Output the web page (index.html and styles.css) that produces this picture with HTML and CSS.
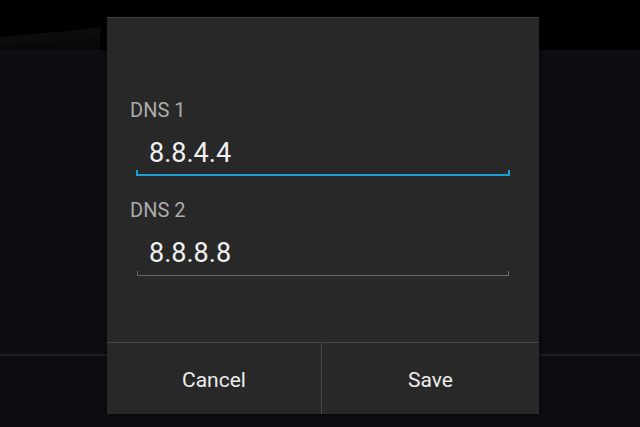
FILE: index.html
```html
<!DOCTYPE html>
<html>
<head>
<meta charset="utf-8">
<link rel="stylesheet" href="styles.css">
</head>
<body>
<div class="backdrop">
  <div class="topbar">
    <svg class="swoosh" width="110" height="50" viewBox="0 0 110 50"><path d="M0 37 C30 34 70 31 101 27 L100 40 C70 43 35 47 0 50 Z" fill="#0c0c0d"/><path d="M0 45 C30 43 60 41 100 39 L100 50 L0 50 Z" fill="#080809"/></svg>
  </div>
  <div class="main">
    <div class="rule"></div>
  </div>
</div>
<div class="dialog">
  <div class="form">
    <div class="label">DNS 1</div>
    <div class="field focused">8.8.4.4</div>
    <div class="label second">DNS 2</div>
    <div class="field plain">8.8.8.8</div>
  </div>
  <div class="actions">
    <div class="btn cancel">Cancel</div>
    <div class="btn save">Save</div>
  </div>
</div>
</body>
</html>
```
FILE: styles.css
```css
html, body {
  margin: 0;
  padding: 0;
}
body {
  width: 640px;
  height: 427px;
  overflow: hidden;
  position: relative;
  background: #0d0e11;
  font-family: Roboto, "Liberation Sans", sans-serif;
}
.backdrop {
  display: flex;
  flex-direction: column;
  height: 427px;
}
.topbar {
  height: 50px;
  background: #000;
  flex: none;
}
.swoosh {
  display: block;
}
.main {
  flex: 1;
  background: #0d0e11;
}
.rule {
  margin-top: 304px;
  height: 2px;
  background: #1e1f22;
}
.dialog {
  position: absolute;
  left: 107px;
  top: 17px;
  width: 432px;
  height: 397px;
  box-sizing: border-box;
  display: flex;
  flex-direction: column;
  background: #282828;
  border-top: 1px solid #3c3c3c;
  box-shadow: 0 0 5px rgba(0,0,0,0.9);
}
.form {
  flex: 1;
  padding: 82px 0 0 23px;
}
.label {
  font-size: 20px;
  line-height: 20px;
  height: 20px;
  color: #ababab;
}
.label.second {
  margin-top: 24px;
}
.field {
  position: relative;
  margin-top: 17px;
  box-sizing: border-box;
  height: 39px;
  font-size: 27px;
  line-height: 32px;
  color: #f1f1f1;
}
.field.focused {
  margin-left: 6px;
  width: 374px;
  padding-left: 13px;
  border-bottom: 2px solid #1a9ed6;
}
.field.focused::before,
.field.focused::after {
  content: "";
  position: absolute;
  bottom: -2px;
  width: 2px;
  height: 6px;
  background: #1a9ed6;
}
.field.plain {
  margin-left: 7px;
  width: 372px;
  padding-left: 12px;
  border-bottom: 1px solid #6a6a6a;
}
.field.plain::before,
.field.plain::after {
  content: "";
  position: absolute;
  bottom: -1px;
  width: 1px;
  height: 5px;
  background: #6a6a6a;
}
.field::before { left: 0; }
.field::after { right: 0; }
.actions {
  height: 72px;
  flex: none;
  box-sizing: border-box;
  border-top: 1px solid #474747;
  display: flex;
}
.btn {
  display: flex;
  align-items: center;
  justify-content: center;
  padding-top: 3px;
  box-sizing: border-box;
  font-size: 21px;
  color: #ececec;
}
.btn.cancel {
  width: 215px;
  border-right: 1px solid #474747;
}
.btn.save {
  flex: 1;
}
```
